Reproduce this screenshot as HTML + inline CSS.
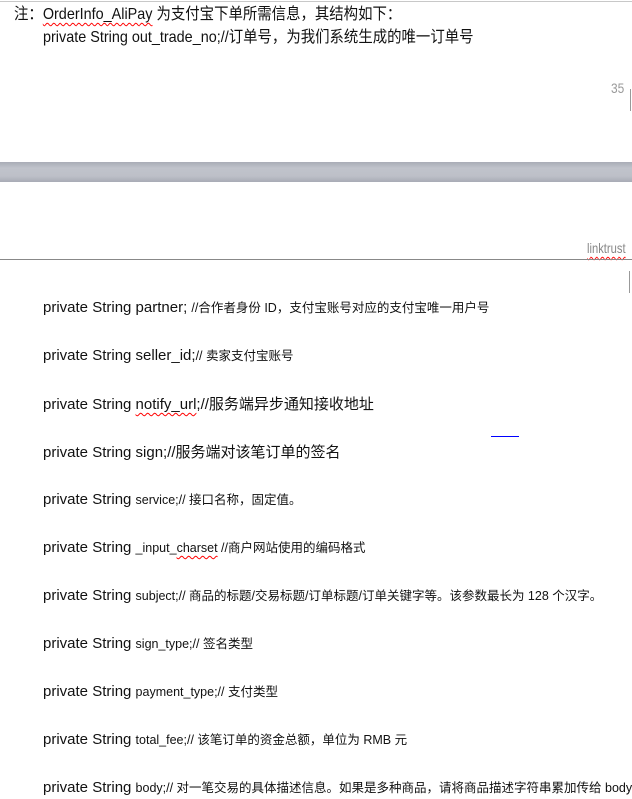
<!DOCTYPE html>
<html><head><meta charset="utf-8"><style>
body{margin:0;width:632px;height:799px;overflow:hidden;background:#fff;position:relative;font-family:"Liberation Sans","Noto Sans CJK SC",sans-serif;color:#111}
.a{position:absolute;white-space:nowrap}
.c{font-size:16px;transform:scaleX(0.9);transform-origin:0 0}
.r{position:absolute;left:43px;white-space:nowrap;font-size:15px}
.r small{font-size:12.5px}
.w{text-decoration:underline wavy red;text-decoration-thickness:1px;text-underline-offset:3px}
</style></head><body>
<div style="position:absolute;left:0;top:1px;width:632px;height:1px;background:#c8c8c8"></div>
<div class="a c" style="left:14px;top:0px">注：<span class="w">OrderInfo_AliPay</span> 为支付宝下单所需信息，其结构如下：</div>
<div class="a c" style="left:43px;top:23px">private String out_trade_no;//订单号，为我们系统生成的唯一订单号</div>
<div class="a" style="left:611px;top:80px;font-size:14px;color:#999;transform:scaleX(.85);transform-origin:0 0">35</div>
<div style="position:absolute;left:630px;top:89px;width:1px;height:22px;background:#999"></div>
<div style="position:absolute;left:0;top:162px;width:632px;height:20px;background:linear-gradient(#a9acb6,#c0c3cb 30%,#bdc0c8 70%,#a8abb5)"></div>
<div class="a" style="left:587px;top:240px;font-size:14px;color:#888;transform:scaleX(.8);transform-origin:0 0"><span class="w">linktrust</span></div>
<div style="position:absolute;left:0;top:259px;width:632px;height:1px;background:#888"></div>
<div style="position:absolute;left:629px;top:271px;width:1px;height:22px;background:#999"></div>
<div style="position:absolute;left:491px;top:436px;width:28px;height:1px;background:#00f"></div>
<div class="r" style="top:297px">private String partner; <small>//合作者身份 ID，支付宝账号对应的支付宝唯一用户号</small></div>
<div class="r" style="top:345px">private String seller_id;<small>// 卖家支付宝账号</small></div>
<div class="r" style="top:393px">private String <span class="w">notify_url</span>;//服务端异步通知接收地址</div>
<div class="r" style="top:441px">private String sign;//服务端对该笔订单的签名</div>
<div class="r" style="top:489px">private String <small>service;// 接口名称，固定值。</small></div>
<div class="r" style="top:537px">private String <small>_input_<span class="w">charset</span> //商户网站使用的编码格式</small></div>
<div class="r" style="top:585px">private String <small>subject;// 商品的标题/交易标题/订单标题/订单关键字等。该参数最长为 128 个汉字。</small></div>
<div class="r" style="top:633px">private String <small>sign_type;// 签名类型</small></div>
<div class="r" style="top:681px">private String <small>payment_type;// 支付类型</small></div>
<div class="r" style="top:729px">private String <small>total_fee;// 该笔订单的资金总额，单位为 RMB 元</small></div>
<div class="r" style="top:777px">private String <small>body;// 对一笔交易的具体描述信息。如果是多种商品，请将商品描述字符串累加传给 body。</small></div>
</body></html>
